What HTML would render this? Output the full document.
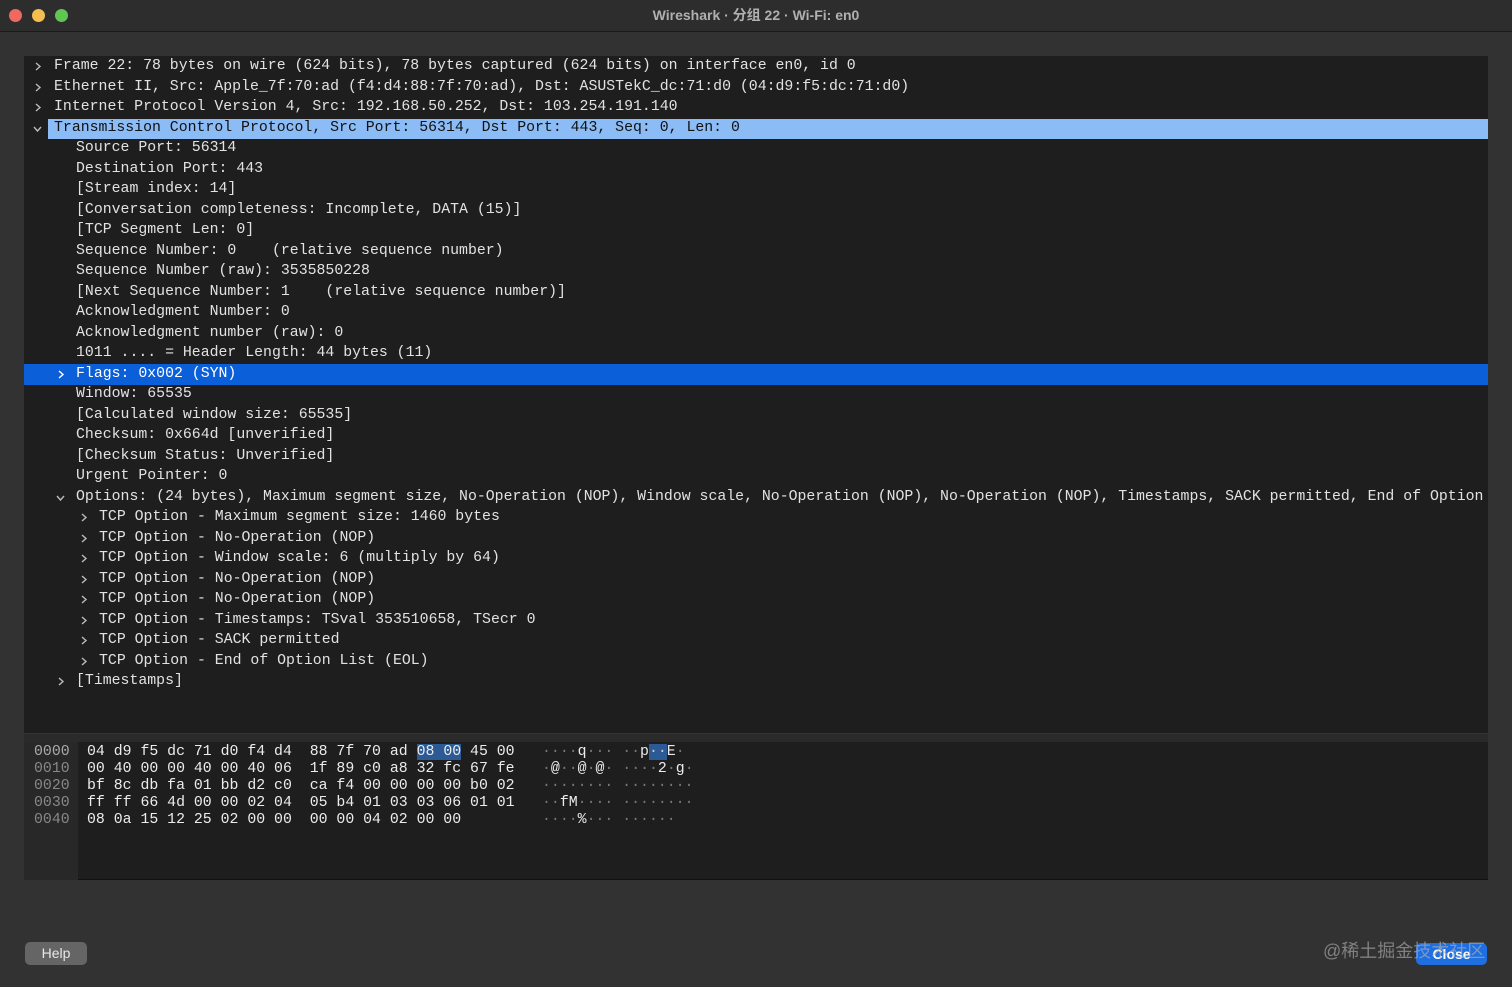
<!DOCTYPE html>
<html><head><meta charset="utf-8"><style>
*{margin:0;padding:0;box-sizing:border-box}
body{width:1512px;height:987px;background:#323232;position:relative;overflow:hidden;font-family:"Liberation Sans","Noto Sans CJK SC",sans-serif}
.title{position:absolute;left:0;top:0;width:1512px;height:32px;background:#2d2d2d;border-bottom:1px solid #1a1a1a;text-align:center;color:#b0b0b0;font-weight:bold;font-size:14px;line-height:31px}
.tl{position:absolute;top:9px;width:13px;height:13px;border-radius:50%}
.tree{position:absolute;left:24px;top:56px;width:1464px;height:677px;background:#1e1e1e;overflow:hidden}
.row{position:absolute;left:0;width:1464px;height:20.5px;font-family:"Liberation Mono",monospace;font-size:14.85px;line-height:21px;color:#e2e2e2;white-space:pre}
.row .t{position:absolute;top:0}
.row svg{position:absolute;top:6px}
.split{position:absolute;left:24px;top:733px;width:1464px;height:9px;background:#2a2a2a;border-top:1px solid #333}
.hex{position:absolute;left:24px;top:742px;width:1464px;height:138px;background:#1e1e1e;border-bottom:1px solid #111}
.off{position:absolute;left:0;top:0;width:54px;height:138px;background:#282828}
.hl{position:absolute;font-family:"Liberation Mono",monospace;font-size:14.85px;line-height:17px;white-space:pre;color:#ececec}
.d{color:#777}
.btn{position:absolute;border-radius:5px;font-size:14px;text-align:center;line-height:23px}
</style></head><body>
<div class="title">Wireshark · 分组 22 · Wi-Fi: en0</div>
<div class="tl" style="left:9px;background:#ed6a5e"></div>
<div class="tl" style="left:32px;background:#f5bf4f"></div>
<div class="tl" style="left:55px;background:#61c554"></div>

<div class="tree">
<div class="row" style="top:0"><svg width="8" height="9" style="left:10px"><path d="M2 1L6 4.5L2 8" stroke="#bbb" stroke-width="1.4" fill="none"/></svg><span class="t" style="left:30px">Frame 22: 78 bytes on wire (624 bits), 78 bytes captured (624 bits) on interface en0, id 0</span></div>
<div class="row" style="top:20.5px"><svg width="8" height="9" style="left:10px"><path d="M2 1L6 4.5L2 8" stroke="#bbb" stroke-width="1.4" fill="none"/></svg><span class="t" style="left:30px">Ethernet II, Src: Apple_7f:70:ad (f4:d4:88:7f:70:ad), Dst: ASUSTekC_dc:71:d0 (04:d9:f5:dc:71:d0)</span></div>
<div class="row" style="top:41px"><svg width="8" height="9" style="left:10px"><path d="M2 1L6 4.5L2 8" stroke="#bbb" stroke-width="1.4" fill="none"/></svg><span class="t" style="left:30px">Internet Protocol Version 4, Src: 192.168.50.252, Dst: 103.254.191.140</span></div>
<div class="row" style="top:61.5px"><div style="position:absolute;left:24px;top:1px;width:1440px;height:20px;background:#8cbcf6"></div><svg width="9" height="8" style="left:9px;top:7px"><path d="M1 2L4.5 6L8 2" stroke="#bbb" stroke-width="1.4" fill="none"/></svg><span class="t" style="left:30px;color:#111">Transmission Control Protocol, Src Port: 56314, Dst Port: 443, Seq: 0, Len: 0</span></div>
<div class="row" style="top:82px"><span class="t" style="left:52px">Source Port: 56314</span></div>
<div class="row" style="top:102.5px"><span class="t" style="left:52px">Destination Port: 443</span></div>
<div class="row" style="top:123px"><span class="t" style="left:52px">[Stream index: 14]</span></div>
<div class="row" style="top:143.5px"><span class="t" style="left:52px">[Conversation completeness: Incomplete, DATA (15)]</span></div>
<div class="row" style="top:164px"><span class="t" style="left:52px">[TCP Segment Len: 0]</span></div>
<div class="row" style="top:184.5px"><span class="t" style="left:52px">Sequence Number: 0    (relative sequence number)</span></div>
<div class="row" style="top:205px"><span class="t" style="left:52px">Sequence Number (raw): 3535850228</span></div>
<div class="row" style="top:225.5px"><span class="t" style="left:52px">[Next Sequence Number: 1    (relative sequence number)]</span></div>
<div class="row" style="top:246px"><span class="t" style="left:52px">Acknowledgment Number: 0</span></div>
<div class="row" style="top:266.5px"><span class="t" style="left:52px">Acknowledgment number (raw): 0</span></div>
<div class="row" style="top:287px"><span class="t" style="left:52px">1011 .... = Header Length: 44 bytes (11)</span></div>
<div class="row" style="top:308px;background:#0b5fd8;height:21px"><svg width="8" height="9" style="left:33px"><path d="M2 1L6 4.5L2 8" stroke="#fff" stroke-width="1.4" fill="none"/></svg><span class="t" style="left:52px;color:#fff">Flags: 0x002 (SYN)</span></div>
<div class="row" style="top:328px"><span class="t" style="left:52px">Window: 65535</span></div>
<div class="row" style="top:348.5px"><span class="t" style="left:52px">[Calculated window size: 65535]</span></div>
<div class="row" style="top:369px"><span class="t" style="left:52px">Checksum: 0x664d [unverified]</span></div>
<div class="row" style="top:389.5px"><span class="t" style="left:52px">[Checksum Status: Unverified]</span></div>
<div class="row" style="top:410px"><span class="t" style="left:52px">Urgent Pointer: 0</span></div>
<div class="row" style="top:430.5px"><svg width="9" height="8" style="left:32px;top:7px"><path d="M1 2L4.5 6L8 2" stroke="#bbb" stroke-width="1.4" fill="none"/></svg><span class="t" style="left:52px">Options: (24 bytes), Maximum segment size, No-Operation (NOP), Window scale, No-Operation (NOP), No-Operation (NOP), Timestamps, SACK permitted, End of Option List (EOL)</span></div>
<div class="row" style="top:451px"><svg width="8" height="9" style="left:56px"><path d="M2 1L6 4.5L2 8" stroke="#bbb" stroke-width="1.4" fill="none"/></svg><span class="t" style="left:75px">TCP Option - Maximum segment size: 1460 bytes</span></div>
<div class="row" style="top:471.5px"><svg width="8" height="9" style="left:56px"><path d="M2 1L6 4.5L2 8" stroke="#bbb" stroke-width="1.4" fill="none"/></svg><span class="t" style="left:75px">TCP Option - No-Operation (NOP)</span></div>
<div class="row" style="top:492px"><svg width="8" height="9" style="left:56px"><path d="M2 1L6 4.5L2 8" stroke="#bbb" stroke-width="1.4" fill="none"/></svg><span class="t" style="left:75px">TCP Option - Window scale: 6 (multiply by 64)</span></div>
<div class="row" style="top:512.5px"><svg width="8" height="9" style="left:56px"><path d="M2 1L6 4.5L2 8" stroke="#bbb" stroke-width="1.4" fill="none"/></svg><span class="t" style="left:75px">TCP Option - No-Operation (NOP)</span></div>
<div class="row" style="top:533px"><svg width="8" height="9" style="left:56px"><path d="M2 1L6 4.5L2 8" stroke="#bbb" stroke-width="1.4" fill="none"/></svg><span class="t" style="left:75px">TCP Option - No-Operation (NOP)</span></div>
<div class="row" style="top:553.5px"><svg width="8" height="9" style="left:56px"><path d="M2 1L6 4.5L2 8" stroke="#bbb" stroke-width="1.4" fill="none"/></svg><span class="t" style="left:75px">TCP Option - Timestamps: TSval 353510658, TSecr 0</span></div>
<div class="row" style="top:574px"><svg width="8" height="9" style="left:56px"><path d="M2 1L6 4.5L2 8" stroke="#bbb" stroke-width="1.4" fill="none"/></svg><span class="t" style="left:75px">TCP Option - SACK permitted</span></div>
<div class="row" style="top:594.5px"><svg width="8" height="9" style="left:56px"><path d="M2 1L6 4.5L2 8" stroke="#bbb" stroke-width="1.4" fill="none"/></svg><span class="t" style="left:75px">TCP Option - End of Option List (EOL)</span></div>
<div class="row" style="top:615px"><svg width="8" height="9" style="left:33px"><path d="M2 1L6 4.5L2 8" stroke="#bbb" stroke-width="1.4" fill="none"/></svg><span class="t" style="left:52px">[Timestamps]</span></div>
</div>

<div class="split"></div>
<div class="hex">
<div class="off"></div>
<div class="hl" style="left:10px;top:2px;color:#aaa">0000
<span style="color:#888">0010
0020
0030
0040</span></div>
<div class="hl" style="left:63px;top:2px">04 d9 f5 dc 71 d0 f4 d4  88 7f 70 ad <span style="background:#2c5a95">08 00</span> 45 00
00 40 00 00 40 00 40 06  1f 89 c0 a8 32 fc 67 fe
bf 8c db fa 01 bb d2 c0  ca f4 00 00 00 00 b0 02
ff ff 66 4d 00 00 02 04  05 b4 01 03 03 06 01 01
08 0a 15 12 25 02 00 00  00 00 04 02 00 00</div>
<div class="hl" style="left:518px;top:2px"><span class="d">····</span>q<span class="d">···</span> <span class="d">··</span>p<span style="background:#2c5a95"><span class="d" style="color:#ccc">··</span></span>E<span class="d">·</span>
<span class="d">·</span>@<span class="d">··</span>@<span class="d">·</span>@<span class="d">·</span> <span class="d">····</span>2<span class="d">·</span>g<span class="d">·</span>
<span class="d">········ ········</span>
<span class="d">··</span>fM<span class="d">····</span> <span class="d">········</span>
<span class="d">····</span>%<span class="d">···</span> <span class="d">······</span></div>
</div>

<div class="btn" style="left:25px;top:942px;width:62px;height:23px;background:#656565;color:#e8e8e8">Help</div>
<div class="btn" style="left:1416px;top:943px;width:71px;height:22px;background:#1f6fe0;color:#fff;font-weight:bold">Close</div>
<div style="position:absolute;left:1323px;top:937px;font-size:18px;color:rgba(180,180,180,0.6);font-family:'Liberation Sans','Noto Sans CJK SC',sans-serif">@稀土掘金技术社区</div>
</body></html>
